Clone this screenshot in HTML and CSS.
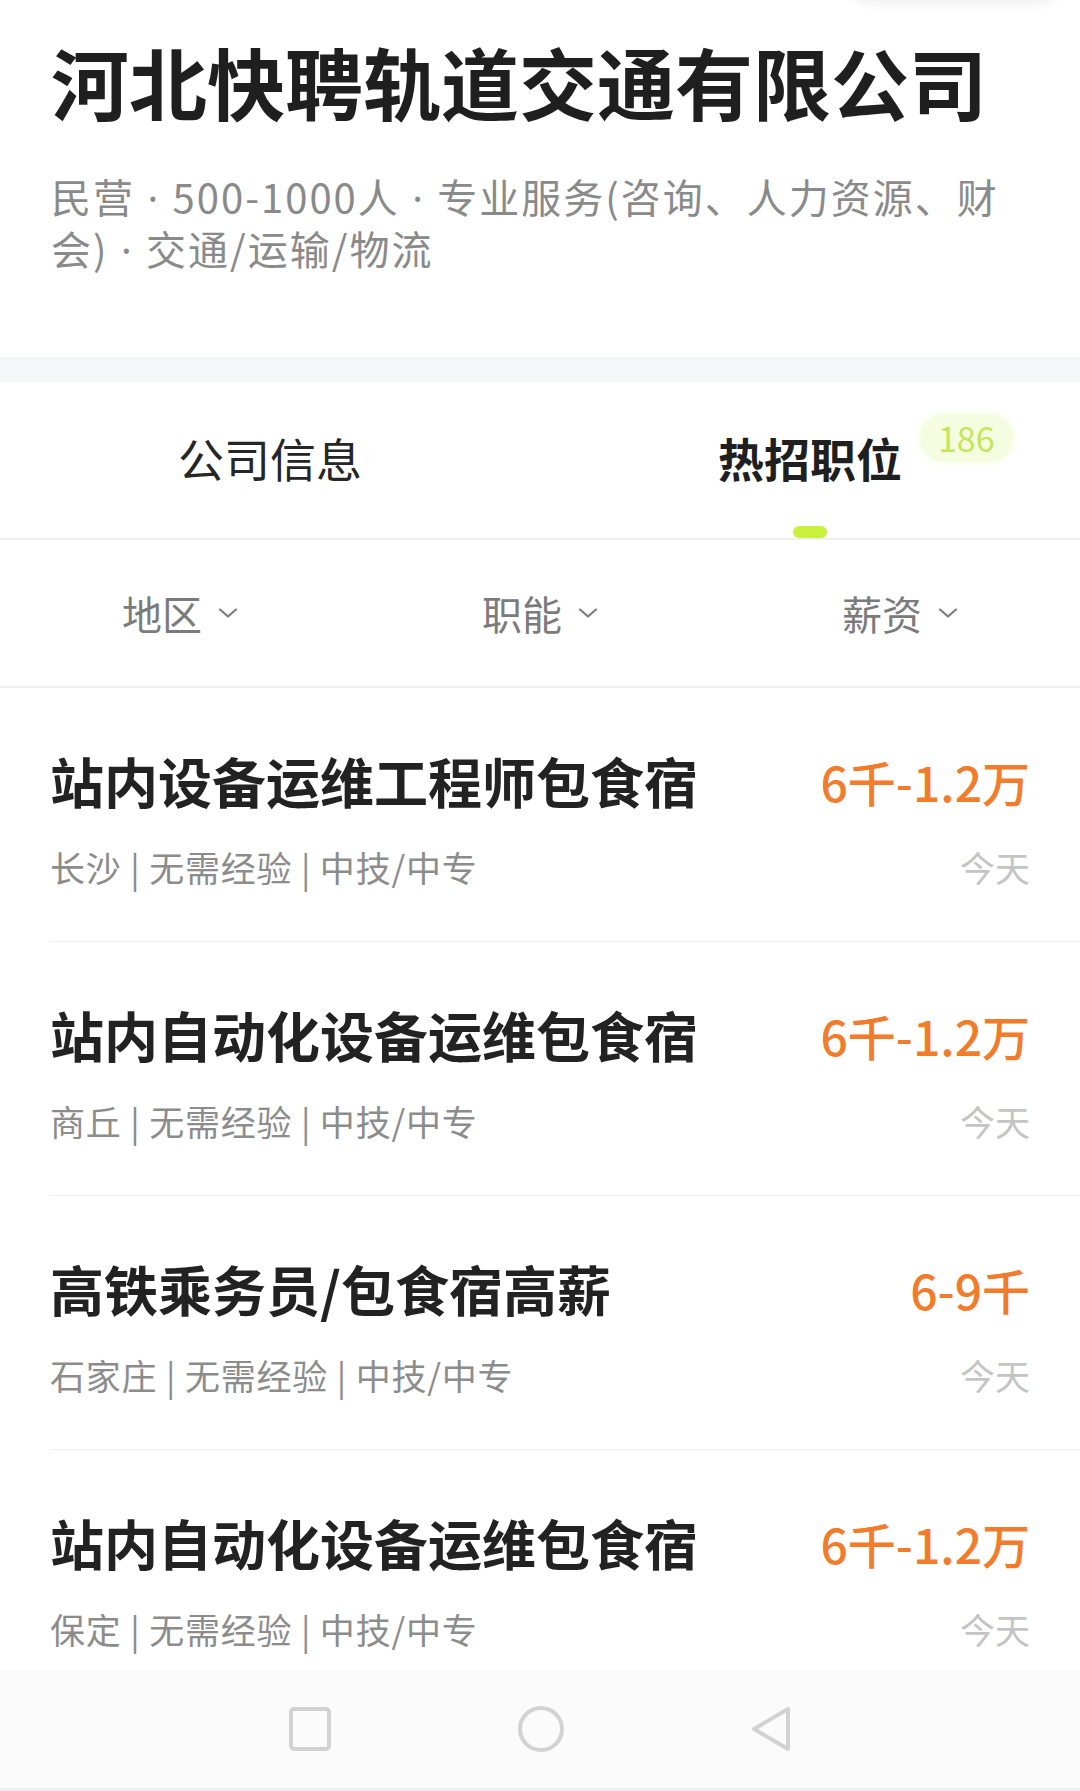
FILE: index.html
```html
<!DOCTYPE html>
<html lang="zh-CN">
<head>
  <meta charset="UTF-8" />
  <meta name="viewport" content="width=device-width, initial-scale=1.0" />
  <title>河北快聘轨道交通有限公司</title>
  <link rel="stylesheet" href="styles.css">
</head>
<body>
  <div class="screen">
    <div class="content">
      <div class="float-shadow"></div>
      <div class="header">
        <h1 class="company">河北快聘轨道交通有限公司</h1>
        <p class="company-meta">民营<span class="dot"> · </span>500-1000人<span class="dot"> · </span>专业服务(咨询、人力资源、财会)<span class="dot"> · </span>交通/运输/物流</p>
      </div>
      <div class="band"></div>

      <div class="tabs">
        <div class="tab">
          <span class="tab-label">公司信息</span>
          <span class="tab-line"></span>
        </div>
        <div class="tab active">
          <span class="tab-label">热招职位<span class="badge">186</span></span>
          <span class="tab-line"></span>
        </div>
      </div>

      <div class="filters">
        <div class="filter">地区<svg class="chev" viewBox="0 0 20 10"><path d="M2 1.5 L10 8.5 L18 1.5"/></svg></div>
        <div class="filter">职能<svg class="chev" viewBox="0 0 20 10"><path d="M2 1.5 L10 8.5 L18 1.5"/></svg></div>
        <div class="filter">薪资<svg class="chev" viewBox="0 0 20 10"><path d="M2 1.5 L10 8.5 L18 1.5"/></svg></div>
      </div>

      <div class="jobs">
        <div class="job">
          <div class="job-row">
            <span class="job-title">站内设备运维工程师包食宿</span>
            <span class="salary">6千-1.2万</span>
          </div>
          <div class="job-row">
            <span class="job-meta">长沙 | 无需经验 | 中技/中专</span>
            <span class="job-date">今天</span>
          </div>
        </div>
        <div class="job">
          <div class="job-row">
            <span class="job-title">站内自动化设备运维包食宿</span>
            <span class="salary">6千-1.2万</span>
          </div>
          <div class="job-row">
            <span class="job-meta">商丘 | 无需经验 | 中技/中专</span>
            <span class="job-date">今天</span>
          </div>
        </div>
        <div class="job">
          <div class="job-row">
            <span class="job-title">高铁乘务员/包食宿高薪</span>
            <span class="salary">6-9千</span>
          </div>
          <div class="job-row">
            <span class="job-meta">石家庄 | 无需经验 | 中技/中专</span>
            <span class="job-date">今天</span>
          </div>
        </div>
        <div class="job">
          <div class="job-row">
            <span class="job-title">站内自动化设备运维包食宿</span>
            <span class="salary">6千-1.2万</span>
          </div>
          <div class="job-row">
            <span class="job-meta">保定 | 无需经验 | 中技/中专</span>
            <span class="job-date">今天</span>
          </div>
        </div>
      </div>
    </div>

    <div class="navbar">
      <svg class="nav-icon" width="42" height="44" viewBox="0 0 42 44"><rect x="2" y="2" width="38" height="40" rx="3"/></svg>
      <svg class="nav-icon" width="46" height="46" viewBox="0 0 46 46"><ellipse cx="23" cy="23" rx="21" ry="21"/></svg>
      <svg class="nav-icon" width="40" height="46" viewBox="0 0 40 46"><path d="M37 3 L3 23 L37 43 Z"/></svg>
    </div>
  </div>
</body>
</html>
```

FILE: styles.css
```css
body {
  margin: 0;
  font-family: "Noto Sans CJK SC", "Noto Sans", sans-serif;
  background: #fff;
  overflow: hidden;
}
.screen {
  height: 100vh;
  display: flex;
  flex-direction: column;
}
.content {
  flex: 1;
  overflow: hidden;
  position: relative;
}
.float-shadow {
  position: absolute;
  top: -40px;
  left: 850px;
  width: 210px;
  height: 40px;
  border-radius: 20px;
  box-shadow: 0 3px 12px rgba(0,0,0,0.07);
}
.header {
  padding: 35px 50px 82px 51px;
}
.company {
  margin: 0;
  font-size: 78px;
  line-height: 92px;
  font-weight: 700;
  color: #1f1f1f;
}
.company-meta {
  margin: 44px 0 0;
  font-size: 40px;
  line-height: 50px;
  letter-spacing: 2px;
  color: #8a8a8a;
}
.dot {
  font-family: "Noto Sans", sans-serif;
}
.band {
  height: 25px;
  background: #f5f6f8;
}
.tabs {
  display: flex;
  border-bottom: 2px solid #efefef;
}
.tab {
  flex: 1;
  display: flex;
  flex-direction: column;
  align-items: center;
  padding-top: 47px;
}
.tab-label {
  position: relative;
  font-size: 46px;
  line-height: 56px;
  color: #262626;
}
.active .tab-label {
  font-weight: 700;
  color: #1f1f1f;
}
.tab-line {
  width: 34px;
  height: 12px;
  margin-top: 41px;
  border-radius: 6px;
}
.active .tab-line {
  background: #c9f03c;
}
.badge {
  position: absolute;
  left: 100%;
  top: -15px;
  margin-left: 18px;
  padding: 0 18px;
  height: 48px;
  line-height: 48px;
  border-radius: 24px;
  background: #f5fde0;
  box-shadow: 0 0 6px 2px #f8fee9;
  font-size: 34px;
  font-weight: 400;
  color: #c6e55a;
}
.filters {
  display: flex;
  padding: 48px 0;
  border-bottom: 2px solid #efefef;
}
.filter {
  flex: 1;
  display: flex;
  align-items: center;
  justify-content: center;
  gap: 16px;
  font-size: 40px;
  line-height: 50px;
  color: #7b7b7b;
}
.chev {
  width: 20px;
  height: 10px;
  fill: none;
  stroke: #7b7b7b;
  stroke-width: 2.2;
  stroke-linecap: round;
  stroke-linejoin: round;
}
.job {
  margin-left: 50px;
  padding: 63px 50px 52px 0;
  border-bottom: 1px solid #f0f0f0;
}
.job-row {
  display: flex;
  justify-content: space-between;
  align-items: center;
}
.job-row + .job-row {
  margin-top: 34px;
}
.job-title {
  font-size: 54px;
  line-height: 60px;
  font-weight: 700;
  color: #222;
}
.salary {
  font-size: 48px;
  line-height: 60px;
  font-weight: 500;
  color: #f07c2c;
}
.job-meta {
  font-size: 35px;
  line-height: 44px;
  letter-spacing: 0.8px;
  color: #8c8c8c;
}
.job-date {
  font-size: 35px;
  line-height: 44px;
  color: #c4c4c4;
}
.navbar {
  height: 121px;
  flex-shrink: 0;
  background: #fbfbfb;
  border-bottom: 3px solid #eeeeee;
  box-sizing: border-box;
  display: flex;
  align-items: center;
  justify-content: center;
  gap: 187px;
}
.nav-icon {
  fill: none;
  stroke: #d2d2d2;
  stroke-width: 4;
  stroke-linejoin: round;
}
```
